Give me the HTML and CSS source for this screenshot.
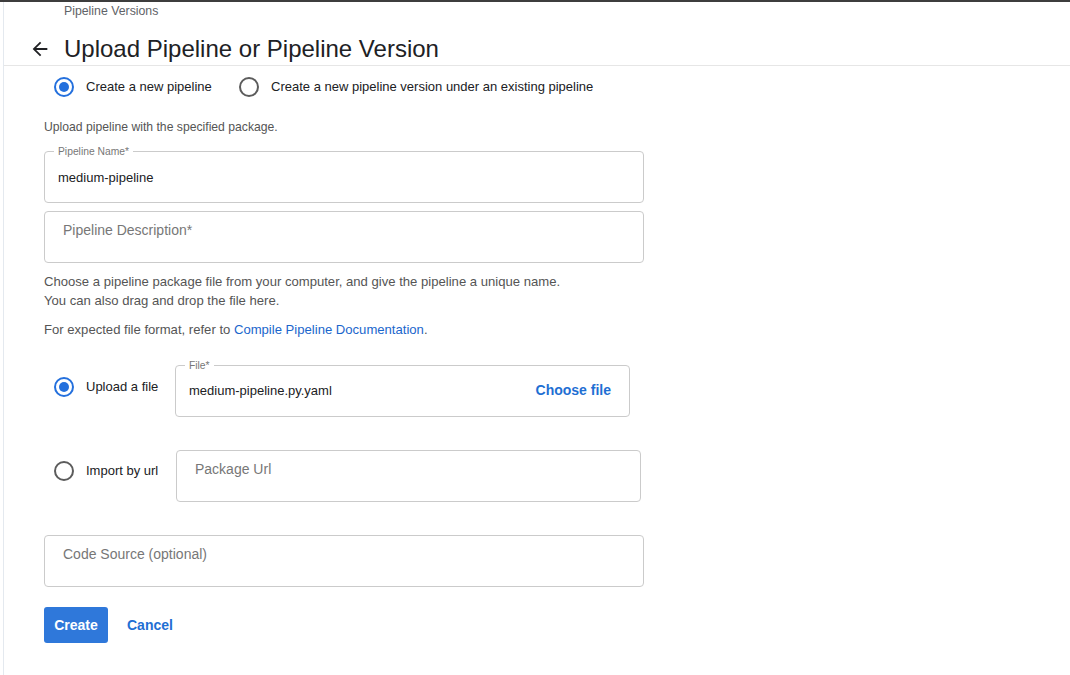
FILE: index.html
```html
<!DOCTYPE html>
<html lang="en">
<head>
<meta charset="utf-8">
<title>Upload Pipeline or Pipeline Version</title>
<link rel="stylesheet" href="styles.css">
</head>
<body>
<div class="topbar"></div>
<div class="page">
  <header class="header">
    <div class="breadcrumb">Pipeline Versions</div>
    <div class="title-row">
      <svg class="back" viewBox="0 0 24 24" width="22" height="22"><path d="M20 11H7.83l5.59-5.59L12 4l-8 8 8 8 1.41-1.41L7.83 13H20v-2z" fill="#202124"/></svg>
      <h1 class="title">Upload Pipeline or Pipeline Version</h1>
    </div>
  </header>
  <main class="content">
    <div class="mode-row">
      <label class="radio-option first"><span class="radio checked"></span><span class="radio-label">Create a new pipeline</span></label>
      <label class="radio-option"><span class="radio"></span><span class="radio-label">Create a new pipeline version under an existing pipeline</span></label>
    </div>
    <p class="hint">Upload pipeline with the specified package.</p>
    <div class="field wide">
      <span class="field-label">Pipeline Name*</span>
      <span class="field-value">medium-pipeline</span>
    </div>
    <div class="field wide gap8">
      <span class="field-placeholder">Pipeline Description*</span>
    </div>
    <div class="help">
      <p>Choose a pipeline package file from your computer, and give the pipeline a unique name.<br>You can also drag and drop the file here.</p>
      <p class="help-2">For expected file format, refer to <a class="link" href="#">Compile Pipeline Documentation</a>.</p>
    </div>
    <div class="source-row file-row">
      <label class="radio-option source"><span class="radio checked"></span><span class="radio-label">Upload a file</span></label>
      <div class="field file-field">
        <span class="field-label">File*</span>
        <span class="field-value">medium-pipeline.py.yaml</span>
        <span class="choose">Choose file</span>
      </div>
    </div>
    <div class="source-row url-row">
      <label class="radio-option source"><span class="radio"></span><span class="radio-label">Import by url</span></label>
      <div class="field url-field">
        <span class="field-placeholder small-pad">Package Url</span>
      </div>
    </div>
    <div class="field wide code-field">
      <span class="field-placeholder">Code Source (optional)</span>
    </div>
    <div class="actions">
      <button class="btn-primary">Create</button>
      <button class="btn-text">Cancel</button>
    </div>
  </main>
</div>
</body>
</html>
```
FILE: styles.css
```css
* { box-sizing: border-box; }
html, body { margin: 0; padding: 0; background: #fff; }
body {
  font-family: "Liberation Sans", Arial, sans-serif;
  color: #202124;
  width: 1070px;
  height: 675px;
  overflow: hidden;
}
.topbar { height: 2px; background: #3d3d3d; }
.page {
  margin-left: 3px;
  border-left: 1px solid #e4e9ef;
  height: 673px;
}
.header { border-bottom: 1px solid #e6e6e6; }
.breadcrumb {
  height: 18px;
  line-height: 18px;
  padding-left: 60px;
  font-size: 12.3px;
  color: #5f6368;
}
.title-row {
  display: flex;
  align-items: center;
  height: 30px;
  margin-top: 14px;
  margin-bottom: 1px;
  padding-left: 25px;
}
.back { display: block; }
.title {
  margin: 0 0 0 13px;
  font-size: 24px;
  font-weight: 400;
  line-height: 30px;
  color: #202124;
}
.content { padding-left: 40px; }
.mode-row { display: flex; align-items: center; height: 20px; margin-top: 11px; }
.radio-option { display: flex; align-items: center; }
.radio-option.first { width: 185px; }
.radio {
  width: 20px; height: 20px;
  margin-left: 10px;
  margin-right: 12px;
  border: 2px solid #5c5c5c;
  border-radius: 50%;
  flex: none;
  display: flex; align-items: center; justify-content: center;
}
.radio.checked { border-color: #2470dd; }
.radio.checked::after {
  content: "";
  width: 10px; height: 10px;
  border-radius: 50%;
  background: #2470dd;
}
.radio-label { font-size: 13px; color: #202124; white-space: nowrap; margin-top: -1px; }
.hint {
  margin: 22px 0 0;
  font-size: 12.2px;
  line-height: 16px;
  color: #555;
}
.field {
  position: relative;
  height: 52px;
  border: 1px solid #cbcbcb;
  border-radius: 4px;
  display: flex;
  align-items: center;
}
.wide { width: 600px; margin-top: 16px; }
.wide.gap8 { margin-top: 8px; align-items: flex-start; }
.field-label {
  position: absolute;
  top: -6px;
  left: 9px;
  padding: 0 4px;
  background: #fff;
  font-size: 10.3px;
  line-height: 11px;
  color: #777;
}
.field-value { padding-left: 13px; font-size: 13px; color: #202124; }
.file-field .field-value { margin-top: -2px; }
.file-field .choose { margin-top: -2px; }
.field-placeholder {
  padding: 9px 0 0 18px;
  font-size: 14px;
  line-height: 18px;
  color: #777;
}
.help { margin-top: 9px; font-size: 13.1px; line-height: 19px; color: #555; }
.help p { margin: 0; }
.help .help-2 { margin-top: 10px; }
.link { color: #1a66cc; text-decoration: none; }
.source-row { display: flex; align-items: flex-start; }
.file-row { margin-top: 26px; }
.url-row { margin-top: 33px; }
.radio-option.source { width: 131px; padding-top: 12px; }
.url-row .radio-option.source { width: 132px; padding-top: 11px; }
.file-field { width: 455px; }
.url-field { width: 465px; align-items: flex-start; }
.field-placeholder.small-pad { padding-left: 18px; }
.choose {
  margin-left: auto;
  margin-right: 18px;
  font-size: 14px;
  font-weight: 700;
  color: #1f6fd3;
}
.code-field { margin-top: 33px; align-items: flex-start; }
.actions { display: flex; align-items: center; margin-top: 20px; }
.btn-primary {
  width: 64px; height: 36px;
  border: none; border-radius: 3px;
  background: #2f78da;
  color: #fff;
  font-family: inherit;
  font-size: 14px;
  font-weight: 700;
  padding: 0;
}
.btn-text {
  margin-left: 19px;
  border: none; background: none; padding: 0;
  font-family: inherit;
  font-size: 14px;
  font-weight: 700;
  color: #1f6fd3;
}
```
